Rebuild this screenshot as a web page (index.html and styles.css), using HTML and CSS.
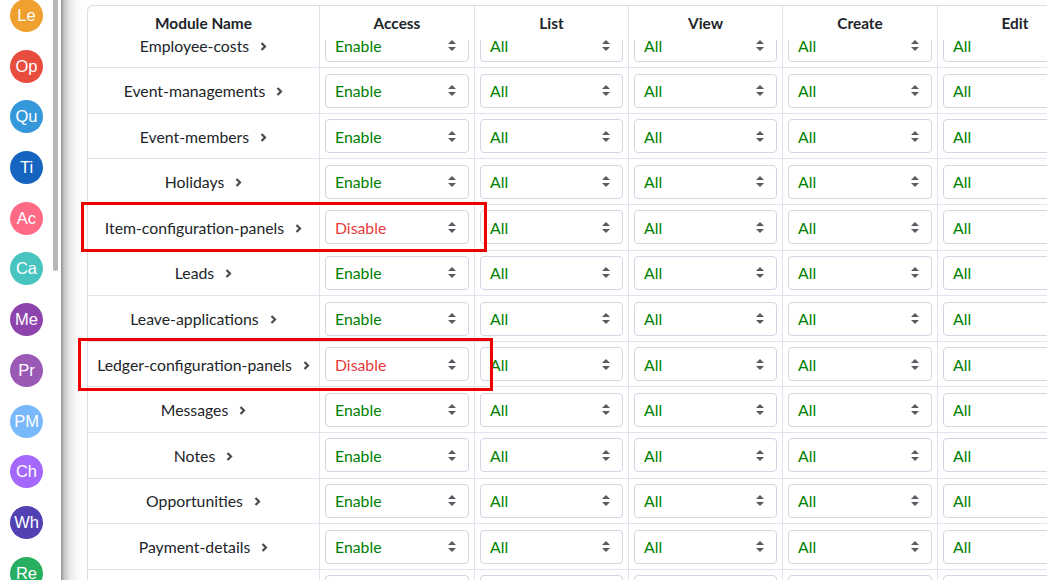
FILE: index.html
```html
<!DOCTYPE html>
<html lang="en">
<head>
    <meta charset="UTF-8">
    <meta name="viewport" content="width=device-width, initial-scale=1.0">
    <title>Permissions</title>
    <link rel="stylesheet" href="styles.css">
</head>
<body>
    <div class="sidebar">
        <div class="avatars">
            <div class="avatar c1">Le</div>
            <div class="avatar c2">Op</div>
            <div class="avatar c3">Qu</div>
            <div class="avatar c4">Ti</div>
            <div class="avatar c5">Ac</div>
            <div class="avatar c6">Ca</div>
            <div class="avatar c7">Me</div>
            <div class="avatar c8">Pr</div>
            <div class="avatar c9">PM</div>
            <div class="avatar c10">Ch</div>
            <div class="avatar c11">Wh</div>
            <div class="avatar c12">Re</div>
        </div>
        <div class="scroll-track"><div class="scroll-thumb"></div></div>
    </div>

    <div class="main">
        <div class="card">
            <div class="row head">
                <div class="cell name">Module Name</div>
                <div class="cell">Access</div>
                <div class="cell">List</div>
                <div class="cell">View</div>
                <div class="cell">Create</div>
                <div class="cell">Edit</div>
                <div class="cell">Delete</div>
            </div>
            <div class="rows-viewport">
                <div class="rows js-rows"></div>
            </div>
        </div>
    </div>

    <div class="mark mark-one"></div>
    <div class="mark mark-two"></div>

    <script>
        const modules=[
            ['Employee-costs',true],
            ['Event-managements',true],
            ['Event-members',true],
            ['Holidays',true],
            ['Item-configuration-panels',false],
            ['Leads',true],
            ['Leave-applications',true],
            ['Ledger-configuration-panels',false],
            ['Messages',true],
            ['Notes',true],
            ['Opportunities',true],
            ['Payment-details',true],
            ['Payments',true]
        ];
        const arrows='<svg class="arrows" width="8" height="11" viewBox="0 0 8 11"><path d="M4 0L0 4h8zM4 11L0 7h8z" fill="#5a5a60"/></svg>';
        const chevron='<svg class="chevron" width="7" height="9" viewBox="0 0 7 9"><path d="M1.5 1l3.5 3.5-3.5 3.5" fill="none" stroke="#4a4a50" stroke-width="2.2"/></svg>';
        let html='';
        modules.forEach(function(m){
            let access=m[1] ? '<div class="select enable">Enable'+arrows+'</div>' : '<div class="select disable">Disable'+arrows+'</div>';
            html+='<div class="row">';
            html+='<div class="cell name"><span>'+m[0]+'</span>'+chevron+'</div>';
            html+='<div class="cell">'+access+'</div>';
            for(let i=0;i<5;i++){
                html+='<div class="cell"><div class="select enable">All'+arrows+'</div></div>';
            }
            html+='</div>';
        });
        document.querySelector('.js-rows').innerHTML=html;
    </script>
</body>
</html>
```

FILE: styles.css
```css
*{
    margin: 0px;
    box-sizing: border-box;
}
body{
    display: flex;
    height: 580px;
    overflow: hidden;
    background-color: white;
    font-family: Lato, 'Open Sans', sans-serif;
    color: #212529;
}
.sidebar{
    flex: none;
    width: 61px;
    display: flex;
    background-color: white;
}
.avatars{
    width: 53px;
    margin-top: -1px;
    display: flex;
    flex-direction: column;
    align-items: center;
    gap: 17.7px;
}
.avatar{
    flex: none;
    width: 33px;
    height: 33px;
    border-radius: 50%;
    color: white;
    font-family: 'Liberation Sans', Arial, sans-serif;
    font-size: 16.5px;
    display: flex;
    align-items: center;
    justify-content: center;
}
.c1{ background-color: #f0a02e; }
.c2{ background-color: #e84c3d; }
.c3{ background-color: #3498db; }
.c4{ background-color: #1565c0; }
.c5{ background-color: #ff6b86; }
.c6{ background-color: #48c4c0; }
.c7{ background-color: #8e44ad; }
.c8{ background-color: #9b59b6; }
.c9{ background-color: #78b8fb; }
.c10{ background-color: #a468fc; }
.c11{ background-color: #5241b3; }
.c12{ background-color: #27ae60; }
.scroll-track{
    width: 8px;
}
.scroll-thumb{
    width: 5px;
    height: 271px;
    background-color: #b6b6bb;
    border-radius: 0 0 3px 3px;
}
.main{
    flex: 1;
    min-width: 0;
    padding: 5px 0 0 26px;
    background: linear-gradient(to right, #8f8f8f 0, #c4c4c4 3px, #e9e9e9 9px, #fafafa 16px, white 22px);
    overflow: hidden;
}
.card{
    width: 1162px;
    height: 620px;
    background-color: white;
    border: 1px solid #dcdde9;
    border-right: none;
    border-radius: 6px 0 0 0;
    overflow: hidden;
}
.row{
    display: grid;
    grid-template-columns: 232px 155px 154px 154px 155px 155px 156px;
    height: 45.6px;
    border-bottom: 1px solid #e2e2ef;
}
.row.head{
    height: 34px;
    border-bottom: none;
    font-weight: bold;
    font-size: 15.4px;
}
.head .cell{
    justify-content: center;
    font-size: 15.4px;
}
.cell{
    display: flex;
    align-items: center;
    padding: 0 5px;
    border-right: 1px solid #e2e2ef;
    font-size: 15.8px;
}
.cell.name{
    justify-content: center;
    gap: 11px;
}
.chevron{
    margin-top: 2px;
}
.rows-viewport{
    height: 600px;
    overflow: hidden;
}
.rows{
    margin-top: -17.3px;
}
.select{
    width: 100%;
    height: 34px;
    border: 1px solid #d4d4e3;
    border-radius: 4px;
    padding: 0 12px 0 9px;
    display: flex;
    align-items: center;
    justify-content: space-between;
}
.enable{
    color: #008000;
}
.disable{
    color: #e8393a;
}
.mark{
    position: absolute;
    border: 3px solid #ee0000;
}
.mark-one{
    left: 81px;
    top: 202px;
    width: 406px;
    height: 50px;
}
.mark-two{
    left: 78px;
    top: 338px;
    width: 415px;
    height: 53px;
}
```
